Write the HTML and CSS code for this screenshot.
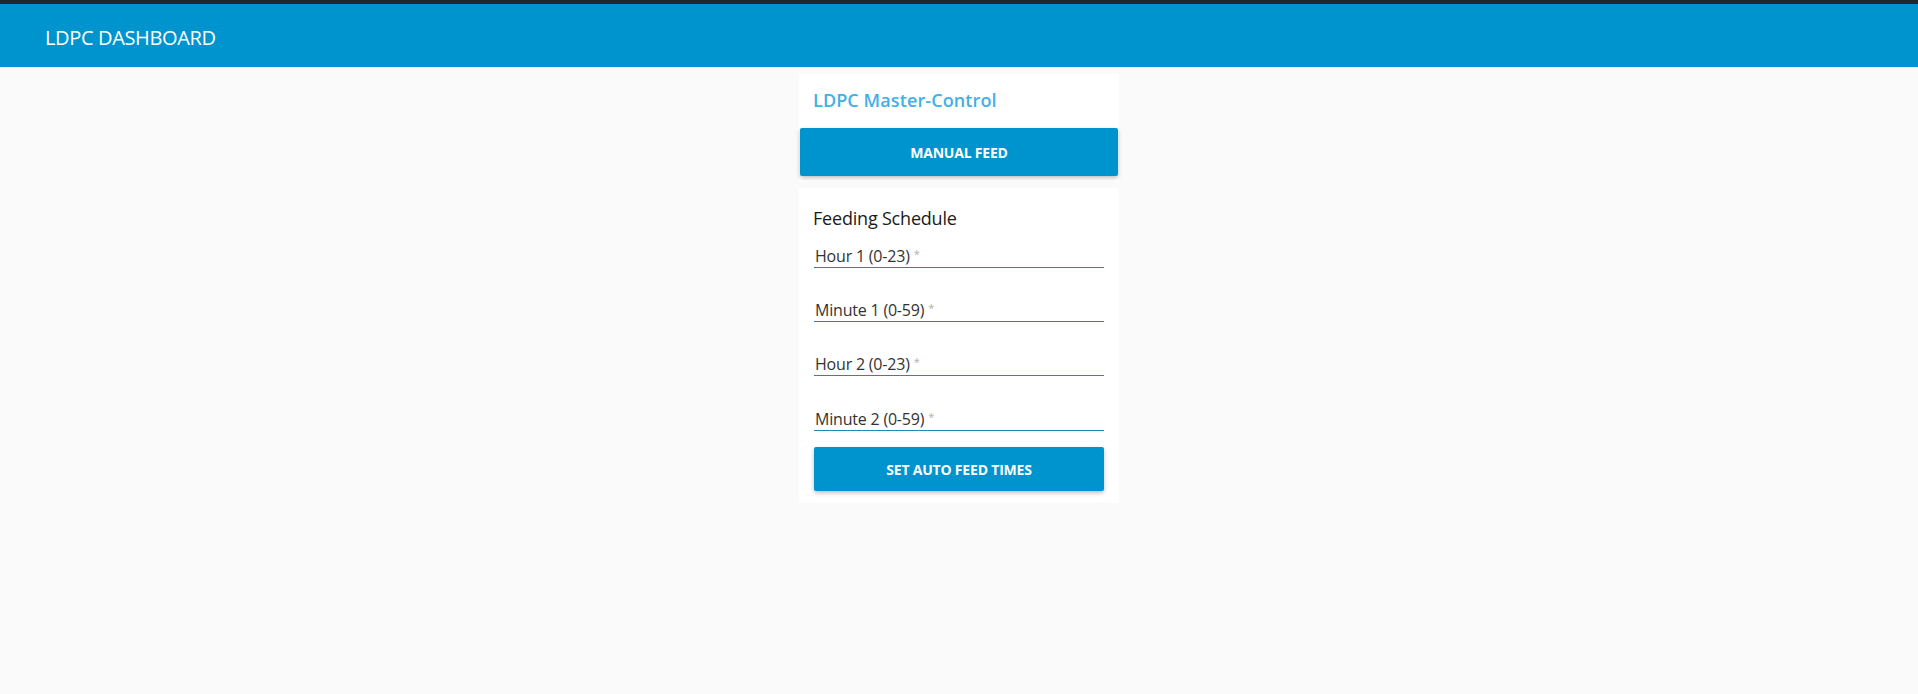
FILE: index.html
```html
<!DOCTYPE html>
<html>
<head>
<meta charset="utf-8">
<link rel="stylesheet" href="styles.css">
</head>
<body>
<header class="topbar">
  <div class="app-title">LDPC DASHBOARD</div>
</header>
<main class="content">
  <section class="card card-master">
    <h2 class="card-title">LDPC Master-Control</h2>
    <button class="btn btn-wide">MANUAL FEED</button>
  </section>
  <section class="card card-schedule">
    <h3 class="form-title">Feeding Schedule</h3>
    <div class="field"><span class="label">Hour 1 (0-23)</span><span class="req">*</span></div>
    <div class="field"><span class="label">Minute 1 (0-59)</span><span class="req">*</span></div>
    <div class="field"><span class="label">Hour 2 (0-23)</span><span class="req">*</span></div>
    <div class="field"><span class="label">Minute 2 (0-59)</span><span class="req">*</span></div>
    <button class="btn btn-form">SET AUTO FEED TIMES</button>
  </section>
</main>
</body>
</html>
```
FILE: styles.css
```css
* { box-sizing: border-box; }
html, body { margin: 0; padding: 0; }
body {
  background: #fafafa;
  font-family: "Open Sans", "Noto Sans", sans-serif;
  width: 1918px;
  height: 694px;
  overflow: hidden;
}
.topbar {
  height: 67px;
  border-top: 4px solid #22272b;
  background: #0094ce;
  display: flex;
  align-items: center;
  padding-left: 45px;
}
.app-title {
  color: #ffffff;
  font-size: 20px;
  line-height: 24px;
  letter-spacing: -0.35px;
  margin-top: 5px;
}
.content {
  display: flex;
  flex-direction: column;
  align-items: center;
  padding-top: 7px;
}
.card {
  width: 320px;
  background: #ffffff;
}
.card-master {
  padding: 0 1px 6px;
}
.card-title {
  margin: 0;
  height: 54px;
  padding: 14px 0 0 13px;
  font-size: 18px;
  line-height: 24px;
  font-weight: 600;
  color: #3fb0e8;
  letter-spacing: 0.1px;
}
.btn {
  display: block;
  width: 100%;
  border: none;
  border-radius: 2px;
  background: #0094ce;
  color: #ffffff;
  font-family: "Open Sans", "Noto Sans", sans-serif;
  font-weight: 700;
  font-size: 14px;
  letter-spacing: -0.2px;
  box-shadow: 0 2px 4px rgba(0,0,0,0.25);
  padding: 0;
}
.btn-wide { height: 48px; }
.card-schedule {
  margin-top: 6px;
  padding: 0 15px 12px 15px;
}
.form-title {
  margin: 0 0 0 -1px;
  padding: 18px 0 0 0;
  font-size: 18px;
  line-height: 24px;
  font-weight: 500;
  color: #1a1a1a;
  letter-spacing: -0.2px;
}
.field {
  height: 38px;
  border-bottom: 1px solid #1f8bb3;
  display: flex;
  align-items: flex-end;
  padding-left: 1px;
  padding-bottom: 1px;
  font-size: 16px;
  line-height: 20px;
  color: #333333;
  letter-spacing: -0.2px;
}
.field + .field { margin-top: 16px; }
.field:nth-of-type(4) { margin-top: 17px; }
.req {
  color: #b0b0b0;
  font-size: 11px;
  line-height: 20px;
  margin-left: 4px;
  align-self: flex-start;
  margin-top: 14px;
}
.btn-form {
  margin-top: 16px;
  height: 44px;
}
```
